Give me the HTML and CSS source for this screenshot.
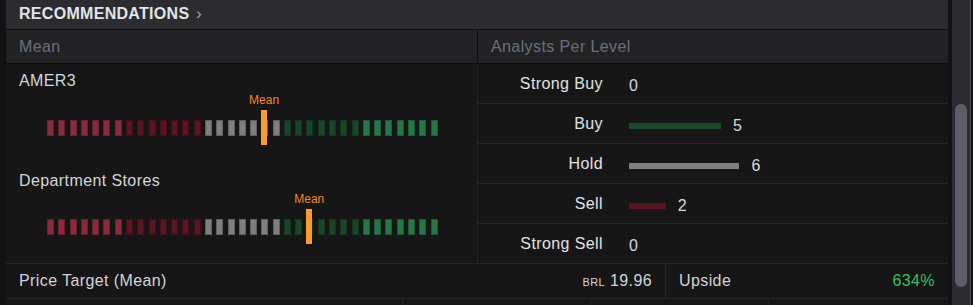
FILE: index.html
```html
<html lang="en">
<head>
    <meta charset="UTF-8">
    <meta name="viewport" content="width=device-width, initial-scale=1.0">
    <title>Recommendations</title>
    <link rel="stylesheet" href="styles.css">
</head>
<body>
    <div class="panel">
        <div class="panel-title">RECOMMENDATIONS <span class="chev">&#8250;</span></div>

        <div class="grid colhead">
            <div class="cell">Mean</div>
            <div class="cell right-col">Analysts Per Level</div>
        </div>

        <div class="grid content">
            <div class="means">
                <div class="block">
                    <div class="name">AMER3</div>
                    <div class="gauge" data-mean="19">
                        <div class="segs"></div>
                        <div class="marker"><span class="marker-label">Mean</span></div>
                    </div>
                </div>
                <div class="block">
                    <div class="name">Department Stores</div>
                    <div class="gauge" data-mean="23">
                        <div class="segs"></div>
                        <div class="marker"><span class="marker-label">Mean</span></div>
                    </div>
                </div>
            </div>
            <div class="levels right-col" id="levels"></div>
        </div>

        <div class="price-row">
            <div class="price-cell">
                <span>Price Target (Mean)</span>
                <span class="value"><small>BRL</small> 19.96</span>
            </div>
            <div class="price-cell upside">
                <span>Upside</span>
                <span class="green">634%</span>
            </div>
        </div>

        <div class="next-row">
            <div></div><div></div><div></div><div></div>
        </div>
    </div>

    <div class="scrollbar">
        <div class="thumb"></div>
    </div>

    <script>
        // build the segmented gauges (35 segments, 7 per level)
        document.querySelectorAll(".gauge").forEach((g) => {
            const segs = g.querySelector(".segs")
            for (let i = 0; i < 35; i++) {
                const s = document.createElement("span")
                s.className = "seg seg-" + Math.floor(i / 7)
                segs.appendChild(s)
            }
            const pos = +g.dataset.mean
            g.querySelector(".marker").style.left = (pos * 384 / 34 - 0.5) + "px"
        })

        const levels = [
            { label: "Strong Buy", count: 0, cls: "" },
            { label: "Buy", count: 5, cls: "bar-buy" },
            { label: "Hold", count: 6, cls: "bar-hold" },
            { label: "Sell", count: 2, cls: "bar-sell" },
            { label: "Strong Sell", count: 0, cls: "" }
        ]

        const list = document.getElementById("levels")
        levels.forEach((lvl) => {
            const row = document.createElement("div")
            row.className = "level"

            const label = document.createElement("span")
            label.className = "level-label"
            label.textContent = lvl.label
            row.appendChild(label)

            if (lvl.count > 0) {
                const bar = document.createElement("span")
                bar.className = "bar " + lvl.cls
                bar.style.width = (lvl.count * 18.4) + "px"
                row.appendChild(bar)
            }

            const num = document.createElement("span")
            num.className = "level-num"
            num.textContent = lvl.count
            row.appendChild(num)

            list.appendChild(row)
        })
    </script>
</body>
</html>
```

FILE: styles.css
```css
body {
    margin: 0;
    height: 305px;
    overflow: hidden;
    display: flex;
    background-color: #121212;
    font-family: "Liberation Sans", Arial, sans-serif;
    letter-spacing: 0.4px;
    color: #d6d8dc;
}

.panel {
    width: 942px;
    margin-left: 6px;
    background-color: #161616;
}

.panel-title {
    height: 29px;
    line-height: 27px;
    padding: 0 13px;
    background-color: #2b2b30;
    border-bottom: 1px solid #0e0e0e;
    font-size: 16px;
    font-weight: bold;
    letter-spacing: 0.3px;
    color: #e4e4e6;
}

.chev {
    font-weight: normal;
    color: #a8a8ad;
    margin-left: 2px;
}

.grid {
    display: grid;
    grid-template-columns: 471px 1fr;
}

.colhead {
    height: 34px;
    background-color: #222225;
    border-bottom: 1px solid #0e0e0e;
    box-sizing: border-box;
}

.colhead .cell {
    padding: 0 13px;
    line-height: 33px;
    font-size: 16px;
    color: #68707c;
}

.right-col {
    border-left: 1px solid #0e0e0e;
}

.content {
    border-bottom: 1px solid #262626;
}

.content .right-col {
    border-left-color: #262626;
}

/* mean gauges */

.block {
    height: 100px;
}

.block + .block {
    height: 99px;
}

.name {
    padding: 7px 13px 0;
    line-height: 20px;
    font-size: 16px;
    color: #d2d6da;
}

.gauge {
    position: relative;
    width: 391px;
    height: 35px;
    margin: 19px 0 0 41px;
    letter-spacing: 0;
}

.block + .block .gauge {
    margin-top: 18px;
}

.segs {
    display: flex;
    justify-content: space-between;
    padding-top: 10px;
}

.seg {
    width: 7px;
    height: 16px;
    box-sizing: border-box;
    border: 1px solid rgba(0, 0, 0, 0.25);
}

.seg-0 { background-color: #8a2b3b; }
.seg-1 { background-color: #5a1520; }
.seg-2 { background-color: #7f7f7f; }
.seg-3 { background-color: #174727; }
.seg-4 { background-color: #247846; }

.marker {
    position: absolute;
    top: 0;
    width: 6px;
    height: 35px;
    background-color: #f99b30;
}

.marker-label {
    position: absolute;
    bottom: 100%;
    left: 50%;
    transform: translateX(-50%);
    margin-bottom: 3px;
    font-size: 12px;
    line-height: 14px;
    color: #f5862b;
}

/* analysts per level */

.level {
    height: 40px;
    box-sizing: border-box;
    border-bottom: 1px solid #262626;
    display: flex;
    align-items: center;
}

.level:last-child {
    height: 39px;
    border-bottom: none;
}

.level-label {
    width: 125px;
    text-align: right;
    margin-right: 26px;
    font-size: 16px;
    color: #e0e2e4;
}

.bar {
    height: 6px;
    margin: 4px 12px 0 0;
}

.bar-buy { background-color: #174b2b; }
.bar-hold { background-color: #808080; }
.bar-sell { background-color: #5b1520; }

.level-num {
    margin-top: 4px;
    font-size: 16px;
    color: #d8dadc;
}

/* price target */

.price-row {
    display: grid;
    grid-template-columns: 659px 1fr;
    height: 35px;
    box-sizing: border-box;
    border-bottom: 1px solid #262626;
}

.price-cell {
    display: flex;
    align-items: center;
    justify-content: space-between;
    padding: 0 13px;
    font-size: 16px;
    color: #d2d4d8;
}

.upside {
    border-left: 1px solid #262626;
}

.value small {
    font-size: 11px;
}

.green {
    color: #34c15a;
}

.next-row {
    display: grid;
    grid-template-columns: 396px 188px 178px 1fr;
    height: 10px;
}

.next-row div + div {
    border-left: 1px solid #262626;
}

.scrollbar {
    width: 18px;
    margin-left: 4px;
    background-color: #2b2b30;
    border-right: 1px solid #4a4a50;
    padding-top: 104px;
}

.thumb {
    width: 12px;
    height: 183px;
    margin-left: 3px;
    border-radius: 6px;
    background-color: #5e5d66;
}
```
